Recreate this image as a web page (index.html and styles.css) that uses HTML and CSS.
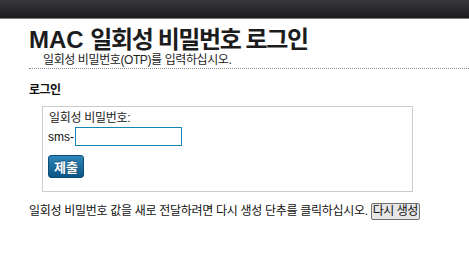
FILE: index.html
```html
<!DOCTYPE html>
<html lang="ko">
<head>
<meta charset="utf-8">
<title>MAC 일회성 비밀번호 로그인</title>
<link rel="stylesheet" href="styles.css">
</head>
<body>
<div class="topbar"></div>
<div class="page">
  <div class="masthead">
    <h1 class="title">MAC <span class="title-ko">일회성 비밀번호 로그인</span></h1>
    <p class="subtitle">일회성 비밀번호(OTP)를 입력하십시오.</p>
  </div>
  <h3 class="section-title">로그인</h3>
  <form class="login-box">
    <label class="field-label" for="otp">일회성 비밀번호:</label>
    <div class="field-row">
      <span class="prefix">sms-</span><input id="otp" class="otp-input" type="text">
    </div>
    <button type="button" class="submit-btn">제출</button>
  </form>
  <p class="resend">일회성 비밀번호 값을 새로 전달하려면 다시 생성 단추를 클릭하십시오. <button type="button" class="resend-btn">다시 생성</button></p>
</div>
</body>
</html>
```

FILE: styles.css
```css
html, body {
  margin: 0;
  padding: 0;
  background: #ffffff;
}
body {
  font-family: "Liberation Sans", "Noto Sans CJK KR", Arial, sans-serif;
  font-size: 12px;
  color: #1a1a1a;
}
.topbar {
  height: 18px;
  background: linear-gradient(to bottom, #37383d, #1b1b1d);
  border-bottom: 1px solid #7a7a7a;
}
.page {
  padding-left: 29px;
}
.masthead {
  border-bottom: 1px dotted #8a8a8a;
  margin-top: 7px;
}
.title {
  margin: 0;
  font-size: 24px;
  line-height: 27px;
  font-weight: bold;
  color: #1c1c1c;
}
.title-ko {
  letter-spacing: -1.4px;
}
.subtitle {
  margin: 0;
  padding-left: 14px;
  font-size: 12px;
  line-height: 15px;
  letter-spacing: -0.4px;
  color: #222;
}
.section-title {
  margin: 13px 0 8px;
  font-size: 12px;
  line-height: 16px;
  font-weight: bold;
  letter-spacing: -0.5px;
  color: #111;
}
.login-box {
  width: 357px;
  margin: 0 0 0 13px;
  border: 1px solid #cccccc;
  padding: 4px 6px 13px 6px;
}
.field-label {
  display: block;
  line-height: 15px;
  letter-spacing: -0.3px;
  color: #222;
}
.field-row {
  display: flex;
  align-items: center;
  margin-top: 1px;
}
.prefix {
  color: #111;
  margin-left: -1px;
  margin-right: 1px;
}
.otp-input {
  box-sizing: border-box;
  height: 19px;
  width: 107px;
  margin: 0;
  padding: 1px 2px;
  border: 1px solid #1485b5;
  font: inherit;
  outline: none;
}
.submit-btn {
  display: block;
  margin-top: 9px;
  margin-left: -1px;
  width: 36px;
  height: 23px;
  padding: 0;
  border: 1px solid #0b4e7c;
  border-radius: 3px;
  background: linear-gradient(to bottom, #2f86b8, #0b5585);
  color: #ffffff;
  font-family: "Liberation Sans", "Noto Sans CJK KR", sans-serif;
  font-size: 13px;
  font-weight: bold;
  text-shadow: 0 -1px 0 rgba(0,0,0,0.4);
}
.resend {
  margin: 10px 0 0;
  line-height: 18px;
  letter-spacing: -0.3px;
  color: #111;
}
.resend-btn {
  height: 17px;
  padding: 0 1px;
  border: 1px solid #707070;
  border-radius: 2px;
  background: #e6e6e6;
  color: #111;
  font-family: "Liberation Sans", "Noto Sans CJK KR", sans-serif;
  font-size: 12px;
  line-height: 14px;
  letter-spacing: -0.5px;
  vertical-align: baseline;
}
```
